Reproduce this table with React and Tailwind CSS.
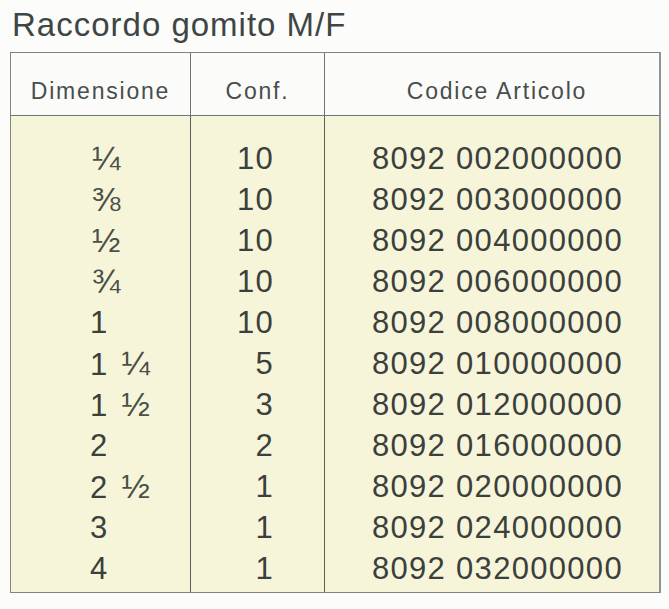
import React from "react";

const rows = [
  [null, "¼", "10", "8092 002000000"],
  [null, "⅜", "10", "8092 003000000"],
  [null, "½", "10", "8092 004000000"],
  [null, "¾", "10", "8092 006000000"],
  ["1", null, "10", "8092 008000000"],
  ["1", "¼", "5", "8092 010000000"],
  ["1", "½", "3", "8092 012000000"],
  ["2", null, "2", "8092 016000000"],
  ["2", "½", "1", "8092 020000000"],
  ["3", null, "1", "8092 024000000"],
  ["4", null, "1", "8092 032000000"],
];

export default function App() {
  return (
    <div
      className="w-[669px] h-[609px] bg-[#fcfcfa] text-[#3b403c] overflow-hidden"
      style={{ fontFamily: '"Liberation Sans", Arial, sans-serif' }}
    >
      <div className="pl-[12px] pt-[5px] h-[52px] text-[33px] leading-[40px] tracking-[1px] text-[#3e4645]">
        Raccordo gomito M/F
      </div>
      <div className="ml-[10px] w-[651px] border-[1.5px] border-[#7d8584] border-r-[2px] border-r-[#8c9493]">
        <div className="grid grid-cols-[180px_134px_1fr] h-[63px] bg-[#fbfcfa] border-b-[1.5px] border-[#6f7773] text-[23px] tracking-[1.8px] text-[#474e4d]">
          <div className="flex items-center justify-center pt-[14px] border-r border-[#6e7571]">Dimensione</div>
          <div className="flex items-center justify-center pt-[14px] border-r border-[#6e7571]">Conf.</div>
          <div className="flex items-center justify-center pt-[14px] pl-[10px]">Codice Articolo</div>
        </div>
        <div className="grid grid-cols-[180px_134px_1fr] bg-[#f6f5da] text-[31px] leading-[41px] tracking-[1.3px]">
          <div className="pl-[79px] pt-[22px] pb-[3px] border-r border-[#5a605b]">
            {rows.map((r, i) => (
              <div key={i} className="flex items-baseline h-[41px]">
                {r[0] && <span>{r[0]}</span>}
                {r[1] && (
                  <span className={(r[0] ? "ml-[13px]" : "ml-[2px]") + " text-[34px] leading-[41px] tracking-normal text-[#4a4f48]"}>
                    {r[1]}
                  </span>
                )}
              </div>
            ))}
          </div>
          <div className="pr-[50px] pt-[22px] pb-[3px] text-right border-r border-[#5a605b]">
            {rows.map((r, i) => (
              <div key={i}>{r[2]}</div>
            ))}
          </div>
          <div className="pl-[47px] pt-[22px] pb-[3px]">
            {rows.map((r, i) => (
              <div key={i}>{r[3]}</div>
            ))}
          </div>
        </div>
      </div>
    </div>
  );
}
